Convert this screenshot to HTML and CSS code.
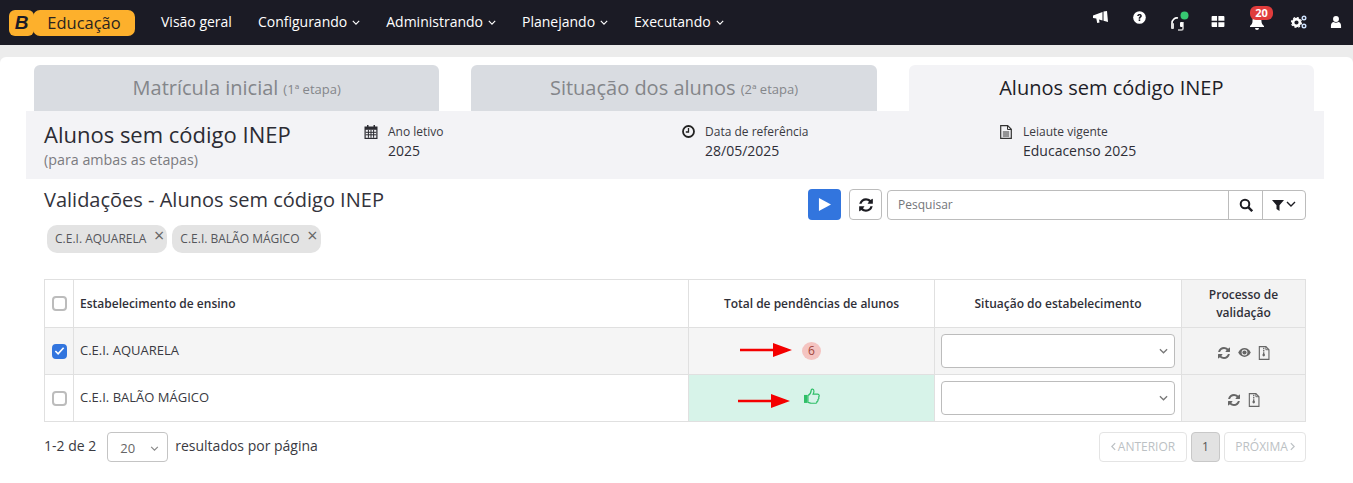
FILE: index.html
```html
<!DOCTYPE html>
<html lang="pt-BR">
<head>
<meta charset="utf-8">
<title>Alunos sem código INEP</title>
<link rel="stylesheet" href="styles.css">
</head>
<body>
<svg class="defs" width="0" height="0" aria-hidden="true">
  <defs>
    <symbol id="i-chev" viewBox="0 0 10 6"><path d="M1 1l4 4 4-4" fill="none" stroke="currentColor" stroke-width="1.4"/></symbol>
    <symbol id="i-left" viewBox="0 0 6 10"><path d="M5 1L1 5l4 4" fill="none" stroke="currentColor" stroke-width="1.5"/></symbol>
    <symbol id="i-right" viewBox="0 0 6 10"><path d="M1 1l4 4-4 4" fill="none" stroke="currentColor" stroke-width="1.5"/></symbol>
    <symbol id="i-sync" viewBox="0 0 1792 1792"><path d="M1639 1056q0 5-1 7-64 268-268 434.5t-478 166.5q-146 0-282.5-55t-243.5-157l-129 129q-19 19-45 19t-45-19-19-45v-448q0-26 19-45t45-19h448q26 0 45 19t19 45-19 45l-137 137q71 66 161 102t187 36q134 0 250-65t186-179q11-17 53-117 8-23 30-23h192q13 0 22.5 9.5t9.5 22.5zm25-800v448q0 26-19 45t-45 19h-448q-26 0-45-19t-19-45 19-45l138-138q-148-137-349-137-134 0-250 65t-186 179q-11 17-53 117-8 23-30 23h-199q-13 0-22.5-9.5t-9.5-22.5v-7q65-268 270-434.5t480-166.5q146 0 284 55.5t245 156.5l130-129q19-19 45-19t45 19 19 45z" fill="currentColor"/></symbol>
    <symbol id="i-zip" viewBox="0 0 12 15"><path d="M1 .7h7l3.300 3.300v10.300H1z" fill="none" stroke="currentColor" stroke-width="1.200"/><path d="M8 .7V4h3.300" fill="none" stroke="currentColor"/><path d="M5 2h1.400v1.400H5zM5 4.400h1.400v1.400H5zM5 6.800h1.400v1.600c.9.400 1 2.900-.7 2.900s-1.600-2.500-.7-2.900z" fill="currentColor"/></symbol>
    <symbol id="i-arrow" viewBox="0 0 52 14"><path d="M0 5.700h33V0l19 7-19 7V8.300H0z" fill="#f40000"/></symbol>
  </defs>
</svg>

<header class="navbar">
  <a class="brand">
    <span class="brand-b">B</span>
    <span class="brand-name">Educação</span>
  </a>
  <nav class="menu">
    <a class="menu-item">Visão geral</a>
    <a class="menu-item">Configurando<svg class="chev"><use href="#i-chev"/></svg></a>
    <a class="menu-item">Administrando<svg class="chev"><use href="#i-chev"/></svg></a>
    <a class="menu-item">Planejando<svg class="chev"><use href="#i-chev"/></svg></a>
    <a class="menu-item">Executando<svg class="chev"><use href="#i-chev"/></svg></a>
  </nav>
  <div class="tools">
    <span class="tool tool-1"><svg width="15" height="12" viewBox="0 0 15 12"><path d="M0 4.500L9.500 1v8.500L6 8.400 6.600 11.500l-2.400.5L3.300 7.500 0 7zM10.500.5L14 0l1 11-4.500-1.200z" fill="#fff"/></svg></span>
    <span class="tool tool-2"><svg width="13" height="13" viewBox="0 0 14 14"><circle cx="7" cy="7" r="6.800" fill="#fff"/><path d="M4.500 5.400C4.700 2.500 9.500 2.600 9.500 5.300c0 1.800-1.800 1.600-1.700 3H6.100C5.900 6 7.800 6 7.800 5.200c0-.9-1.500-.9-1.600.2z" fill="#1b1b25"/><rect x="6.100" y="9" width="1.700" height="1.800" fill="#1b1b25"/></svg></span>
    <span class="tool tool-3"><svg width="20" height="20" viewBox="0 0 20 20"><path d="M2 17v-5a5 5 0 0 1 6-5" fill="none" stroke="#fff" stroke-width="1.600"/><rect x="1" y="12" width="3" height="6" rx="1" fill="#ddd"/><path d="M13 11v6.500a1.500 1.500 0 0 1-1.500 1.500H8" fill="none" stroke="#ccc" stroke-width="1.600"/><rect x="10" y="11" width="3" height="5" rx="1" fill="#fff"/><circle cx="14.500" cy="4.500" r="4" fill="#37c871"/></svg></span>
    <span class="tool tool-4"><svg width="14" height="11" viewBox="0 0 14 12"><path d="M0 1a1 1 0 0 1 1-1h5v5.300H0zM7.400 0H13a1 1 0 0 1 1 1v4.300H7.400zM0 6.700h6V12H1a1 1 0 0 1-1-1zM7.400 6.700H14V11a1 1 0 0 1-1 1H7.400z" fill="#fff"/></svg></span>
    <span class="tool tool-5">
      <svg width="14" height="15" viewBox="0 0 14 15"><path d="M7 0a1 1 0 0 1 1 1c3 .6 3.500 3 3.500 5.500 0 2 1 3 2.500 4.500v1H0v-1c1.500-1.500 2.500-2.500 2.500-4.500C2.500 4 3 1.600 6 1a1 1 0 0 1 1-1zM5 13h4a2 2 0 0 1-4 0z" fill="#fff"/></svg>
      <span class="badge-count">20</span>
    </span>
    <span class="tool tool-6"><svg width="16" height="14" viewBox="0 0 16 14"><circle cx="5.500" cy="7.500" r="3.400" fill="none" stroke="#fff" stroke-width="2.600"/><circle cx="5.500" cy="7.500" r="5" fill="none" stroke="#fff" stroke-width="1.200" stroke-dasharray="2 1.900"/><circle cx="13" cy="3" r="1.800" fill="none" stroke="#cfe3ff" stroke-width="1.400"/><circle cx="13" cy="11" r="1.800" fill="none" stroke="#cfe3ff" stroke-width="1.400"/></svg></span>
    <span class="tool tool-7"><svg width="12" height="12" viewBox="0 0 11 13"><circle cx="5.500" cy="3.200" r="3.200" fill="#fff"/><path d="M0 13v-2.500C0 8 1.500 6.500 3 6.500c1.500 1 3.500 1 5 0 1.500 0 3 1.500 3 4V13z" fill="#fff"/></svg></span>
  </div>
</header>

<main class="panel">
  <div class="tabs">
    <a class="tab"><span class="tab-title">Matrícula inicial</span> <small>(1ª etapa)</small></a>
    <a class="tab"><span class="tab-title">Situação dos alunos</span> <small>(2ª etapa)</small></a>
    <a class="tab tab-active"><span class="tab-title">Alunos sem código INEP</span></a>
  </div>

  <section class="summary">
    <div class="summary-title">
      <h1>Alunos sem código INEP</h1>
      <p>(para ambas as etapas)</p>
    </div>
    <div class="info info-year">
      <svg class="info-icon" width="14" height="14" viewBox="0 0 14 14"><path d="M3 0h1.500v1.500h5V0H11v1.500h2.500V14H.5V1.500H3z" fill="#2c2c33"/><path d="M1.700 4.800h10.600v8H1.700z" fill="#f3f3f6"/><path d="M1.700 7.300h10.600M1.700 9.800h10.600M4.400 4.800v8M7 4.800v8M9.600 4.800v8" stroke="#2c2c33"/></svg>
      <div><span class="info-label">Ano letivo</span><span class="info-value">2025</span></div>
    </div>
    <div class="info info-date">
      <svg class="info-icon" width="13" height="13" viewBox="0 0 13 13"><circle cx="6.500" cy="6.500" r="5.500" fill="none" stroke="#222" stroke-width="1.800"/><path d="M6.500 3v4H3.800" fill="none" stroke="#222" stroke-width="1.300"/></svg>
      <div><span class="info-label">Data de referência</span><span class="info-value">28/05/2025</span></div>
    </div>
    <div class="info info-layout">
      <svg class="info-icon" width="12" height="14" viewBox="0 0 12 14"><path d="M.7.7h7l3.600 3.600v9H.7z" fill="none" stroke="#333" stroke-width="1.200"/><path d="M7.500.7v3.800h3.800M2.800 7h6.400M2.800 9h6.400M2.800 11h6.400" fill="none" stroke="#333"/></svg>
      <div><span class="info-label">Leiaute vigente</span><span class="info-value">Educacenso 2025</span></div>
    </div>
  </section>

  <section class="toolbar">
    <h2>Validações - Alunos sem código INEP</h2>
    <div class="actions">
      <button class="btn-play" type="button" aria-label="Executar"><svg width="13" height="13" viewBox="0 0 14 14"><path d="M1 0l13 7-13 7z" fill="#fff"/></svg></button>
      <button class="btn-sync" type="button" aria-label="Atualizar"><svg class="sync-dark"><use href="#i-sync"/></svg></button>
      <div class="search">
        <span class="search-input">Pesquisar</span>
        <span class="search-btn"><svg width="14" height="14" viewBox="0 0 14 14"><circle cx="6" cy="6" r="4.300" fill="none" stroke="#1c1c22" stroke-width="2"/><path d="M9.200 9.200l4 4" stroke="#1c1c22" stroke-width="2.400"/></svg></span>
        <span class="filter-btn"><svg width="12" height="11" viewBox="0 0 12 11"><path d="M0 0h12L7.500 5.200V11L4.500 9V5.200z" fill="#1c1c22"/></svg><svg class="chev filter-chev"><use href="#i-chev"/></svg></span>
      </div>
    </div>
  </section>

  <div class="chips">
    <span class="chip">C.E.I. AQUARELA<span class="chip-x">×</span></span>
    <span class="chip">C.E.I. BALÃO MÁGICO<span class="chip-x">×</span></span>
  </div>

  <table class="grid">
    <colgroup>
      <col class="col-check"><col class="col-name"><col class="col-total"><col class="col-status"><col class="col-process">
    </colgroup>
    <thead>
      <tr>
        <th class="cell-check"><span class="check"></span></th>
        <th class="th-name">Estabelecimento de ensino</th>
        <th>Total de pendências de alunos</th>
        <th>Situação do estabelecimento</th>
        <th class="th-process">Processo de validação</th>
      </tr>
    </thead>
    <tbody>
      <tr class="row-gray">
        <td class="cell-check"><span class="check checked"><svg width="12" height="10" viewBox="0 0 12 10"><path d="M1.500 5l3 3 6-6.500" fill="none" stroke="#fff" stroke-width="1.800"/></svg></span></td>
        <td class="cell-name">C.E.I. AQUARELA</td>
        <td class="cell-total">
          <svg class="arrow arrow-1"><use href="#i-arrow"/></svg>
          <span class="pending">6</span>
        </td>
        <td class="cell-select"><span class="select"><svg class="chev select-chev"><use href="#i-chev"/></svg></span></td>
        <td class="cell-process">
          <span class="proc-icons">
            <svg class="ic-sync"><use href="#i-sync"/></svg>
            <svg class="ic-eye" viewBox="0 0 14 10"><path d="M0 5c3.500-6.500 10.500-6.500 14 0-3.500 6.500-10.500 6.500-14 0z" fill="#666"/><circle cx="7" cy="5" r="3.200" fill="#f5f5f5"/><circle cx="7" cy="5" r="2.300" fill="#666"/></svg>
            <svg class="ic-zip"><use href="#i-zip"/></svg>
          </span>
        </td>
      </tr>
      <tr class="row-white">
        <td class="cell-check"><span class="check"></span></td>
        <td class="cell-name">C.E.I. BALÃO MÁGICO</td>
        <td class="cell-total cell-ok">
          <svg class="arrow arrow-2"><use href="#i-arrow"/></svg>
          <svg class="thumb" width="16" height="16" viewBox="0 0 15 15"><path d="M0 6.500h3.200V14H0z" fill="#2fbf68"/><path d="M3.700 7c1.800-.8 2.900-2.600 3.100-5 .1-1.400 2.400-1.200 2.500.7.100 1-.3 2-.8 3.100h4.300c1.700 0 1.800 2 .9 2.600.5 1 .2 2-.6 2.400.2 1-.3 1.800-1 2 .1 1-.5 1.500-1.500 1.500H7c-1.300 0-2.300-.6-3.300-.9z" fill="none" stroke="#2fbf68" stroke-width="1.100"/></svg>
        </td>
        <td class="cell-select"><span class="select"><svg class="chev select-chev"><use href="#i-chev"/></svg></span></td>
        <td class="cell-process">
          <span class="proc-icons">
            <svg class="ic-sync"><use href="#i-sync"/></svg>
            <svg class="ic-zip"><use href="#i-zip"/></svg>
          </span>
        </td>
      </tr>
    </tbody>
  </table>

  <footer class="pager">
    <div class="pager-left">
      <span class="pager-text">1-2 de 2</span>
      <span class="page-size">20<svg class="chev size-chev"><use href="#i-chev"/></svg></span>
      <span class="pager-text">resultados por página</span>
    </div>
    <div class="pager-right">
      <span class="page-btn page-prev"><svg class="page-arrow"><use href="#i-left"/></svg>ANTERIOR</span>
      <span class="page-num">1</span>
      <span class="page-btn page-next">PRÓXIMA<svg class="page-arrow"><use href="#i-right"/></svg></span>
    </div>
  </footer>
</main>
</body>
</html>
```
FILE: styles.css
```css
* { box-sizing: border-box; }
html, body { margin: 0; padding: 0; }
body {
  width: 1353px;
  height: 483px;
  overflow: hidden;
  background: #ececec;
  font-family: "Open Sans", "Liberation Sans", sans-serif;
  color: #333;
}
.defs { position: absolute; }
a { color: inherit; text-decoration: none; }

.navbar {
  display: flex;
  align-items: center;
  height: 45px;
  background: #1b1b25;
  padding-left: 9px;
}
.brand { display: flex; width: 126px; height: 26px; }
.brand-b {
  width: 25px;
  height: 26px;
  border-radius: 6px;
  background: #fdb02c;
  color: #1b1b25;
  font: italic 700 19px/26px "Liberation Sans", sans-serif;
  text-align: center;
}
.brand-name {
  flex: 1;
  margin-left: -1px;
  border-radius: 7px;
  background: #fdb02c;
  color: #2a2320;
  font-size: 16.500px;
  font-weight: 500;
  line-height: 25px;
  text-align: center;
}
.menu {
  display: flex;
  align-items: center;
  gap: 26px;
  margin-left: 26px;
  padding-bottom: 2px;
  color: #fff;
  font-size: 14px;
}
.menu-item { display: flex; align-items: center; white-space: nowrap; }
.chev { width: 8px; height: 5px; color: inherit; margin-left: 5px; margin-top: 2px; }

.tools {
  margin-left: auto;
  display: flex;
  height: 45px;
}
.tool { position: relative; display: flex; justify-content: center; align-items: flex-start; }
.tool-1 { width: 39px; padding-top: 11px; }
.tool-2 { width: 39px; padding-top: 11px; }
.tool-3 { width: 39px; padding-top: 11px; padding-left: 2px; }
.tool-4 { width: 39px; padding-top: 16px; }
.tool-5 { width: 40px; padding-top: 15px; }
.tool-6 { width: 41px; padding-top: 15px; padding-left: 3px; padding-right: 1px; }
.tool-7 { width: 35px; padding-top: 16px; padding-left: 1px; }
.badge-count {
  position: absolute;
  top: 6px;
  left: 13px;
  width: 23px;
  height: 14px;
  border-radius: 6px;
  background: #e03c3c;
  color: #fff;
  font-size: 11px;
  font-weight: 700;
  line-height: 14px;
  text-align: center;
}

.panel {
  margin-top: 12px;
  height: 426px;
  background: #fff;
  border-radius: 6px 6px 0 0;
  padding: 8px 0 0;
}
.tabs {
  display: flex;
  gap: 32px;
  margin: 0 39px 0 34px;
  height: 46px;
}
.tab {
  flex: 1;
  display: flex;
  align-items: center;
  justify-content: center;
  gap: 5px;
  padding-bottom: 2px;
  background: #d9dce1;
  border-radius: 6px 6px 0 0;
  color: #84868a;
}
.tab-title { font-size: 20px; }
.tab small { font-size: 13px; margin-top: 4px; }
.tab-active { background: #f3f3f6; color: #1e1e28; }

.summary {
  display: flex;
  margin: 0 29px 0 26px;
  height: 68px;
  background: #f3f3f6;
  padding: 8px 18px 0;
  color: #333;
}
.summary-title { width: 320px; }
.summary-title h1 { margin: 0; font-size: 22px; font-weight: 400; line-height: 30px; color: #2b2b33; }
.summary-title p { margin: 2px 0 0; font-size: 14.300px; line-height: 18px; color: #7b7b80; }
.info { display: flex; padding-top: 5px; }
.info-icon { margin-top: 1px; flex: none; }
.info-label { display: block; font-size: 12px; line-height: 16px; color: #3a3a42; }
.info-value { display: block; font-size: 14px; line-height: 20px; margin-top: 1px; color: #2e2e36; }
.info-year { width: 318px; gap: 10px; }
.info-date { width: 318px; gap: 10px; }
.info-layout { gap: 11px; }

.toolbar {
  display: flex;
  justify-content: space-between;
  align-items: flex-start;
  margin: 0 47px 0 44px;
  height: 50px;
}
.toolbar h2 { margin: 7px 0 0; font-size: 20px; font-weight: 400; line-height: 28px; color: #33333b; }
.actions { display: flex; align-items: flex-start; margin-top: 10px; }
button { padding: 0; font: inherit; }
.btn-play {
  display: flex; align-items: center; justify-content: center;
  width: 33px; height: 31px;
  background: #3275de;
  border: 0;
  border-radius: 4px;
  margin-right: 8px;
}
.btn-sync {
  display: flex; align-items: center; justify-content: center;
  width: 33px; height: 31px;
  background: #fff;
  border: 1px solid #bcbcbc;
  border-radius: 4px;
  margin-right: 5px;
}
.sync-dark { width: 16px; height: 16px; color: #1c1c22; }
.search {
  display: flex;
  width: 419px;
  height: 30px;
  margin-top: 1px;
  border: 1px solid #bcbcbc;
  border-radius: 4px;
}
.search-input { flex: 1; padding-left: 10px; font-size: 12px; line-height: 28px; color: #74767a; }
.search-btn {
  display: flex; align-items: center; justify-content: center;
  width: 34px;
  border-left: 1px solid #bcbcbc;
}
.filter-btn {
  display: flex; align-items: center; justify-content: center;
  width: 43px;
  border-left: 1px solid #bcbcbc;
  color: #1c1c22;
}
.filter-chev { margin: 0 0 2px 2px; width: 10px; height: 6px; }

.chips { display: flex; gap: 5px; margin: -4px 0 0 47px; height: 54px; }
.chip {
  position: relative;
  height: 28px;
  background: #e3e3e3;
  border-radius: 10px;
  padding: 0 21px 0 8px;
  font-size: 12px;
  line-height: 28px;
  color: #55565b;
  white-space: nowrap;
}
.chip-x { position: absolute; right: 3px; top: -2px; font-size: 18px; line-height: 24px; color: #666; }

.grid {
  table-layout: fixed;
  border-collapse: collapse;
  width: 1262px;
  margin-left: 44px;
  font-size: 13px;
  color: #333;
}
.col-check { width: 29px; }
.col-total { width: 246px; }
.col-status { width: 247px; }
.col-process { width: 124px; }
.grid th, .grid td { border: 1px solid #e0e0e0; padding: 0; }
.grid th {
  height: 48px;
  font-size: 12px;
  font-weight: 600;
  text-align: center;
  color: #303038;
  line-height: 18px;
}
.grid th.th-name { text-align: left; padding-left: 6px; }
.grid th.th-process { background: #f3f3f3; padding: 0 20px; }
.grid td { height: 47px; padding-left: 6px; color: #3a3a42; }
.grid td.cell-name { padding-bottom: 2px; }
.grid td.cell-check, .grid th.cell-check { padding: 0; text-align: center; }
.row-gray td { background: #f5f5f5; }
.check {
  display: inline-flex;
  align-items: center;
  justify-content: center;
  width: 15px;
  height: 15px;
  margin-bottom: 2px;
  vertical-align: middle;
  border: 2px solid #bcbcbc;
  border-radius: 4px;
  background: #fff;
}
.checked { background: #3275de; border-color: #3275de; }
.grid td.cell-total { position: relative; padding: 0; text-align: center; }
.grid td.cell-ok { background: #d7f3e9; }
.arrow { position: absolute; width: 52px; height: 14px; }
.arrow-1 { left: 51px; top: 15px; }
.arrow-2 { left: 49px; top: 19px; }
.pending {
  display: inline-block;
  width: 19px;
  height: 18px;
  margin-bottom: 1px;
  border-radius: 50%;
  background: #f4c4c1;
  color: #a0443c;
  font-size: 12px;
  line-height: 18px;
}
.thumb { margin-bottom: 4px; display: inline-block; vertical-align: middle; }
.grid td.cell-select { padding: 0 6px; }
.select {
  display: flex;
  align-items: center;
  justify-content: flex-end;
  height: 34px;
  margin-top: -1px;
  padding-right: 6px;
  background: #fff;
  border: 1px solid #bcbcbc;
  border-radius: 4px;
  color: #777;
}
.select-chev { width: 9px; height: 6px; margin: 1px 0 0; }
.grid td.cell-process { background: #f3f3f3; padding: 0; text-align: center; }
.proc-icons { display: inline-flex; align-items: center; gap: 7px; color: #666; vertical-align: middle; }
.ic-sync { width: 14px; height: 14px; }
.ic-eye { width: 13px; height: 9px; }
.ic-zip { width: 12px; height: 14px; }

.pager {
  display: flex;
  justify-content: space-between;
  margin: 10px 47px 0 44px;
  font-size: 14px;
  color: #3a3a42;
}
.pager-left { display: flex; align-items: center; gap: 8px; height: 30px; }
.pager-text { padding-bottom: 4px; }
.page-size {
  display: flex;
  align-items: center;
  justify-content: space-between;
  width: 61px;
  height: 30px;
  margin-left: 3px;
  margin-right: -1px;
  padding: 2px 8px 0 12px;
  border: 1px solid #c4c4c4;
  border-radius: 4px;
  font-size: 13px;
  color: #666;
}
.size-chev { margin: 0; width: 9px; height: 5px; color: #888; }
.pager-right { display: flex; gap: 4px; }
.page-btn {
  display: flex; align-items: center; justify-content: center;
  gap: 2px;
  height: 30px;
  padding-bottom: 2px;
  border: 1px solid #e4e4e4;
  border-radius: 4px;
  font-size: 12px;
  color: #bcc1c4;
}
.page-arrow { width: 5px; height: 9px; margin-top: 1px; }
.page-prev { width: 88px; }
.page-next { width: 82px; }
.page-num {
  display: flex; align-items: center; justify-content: center;
  width: 29px;
  height: 30px;
  padding-bottom: 2px;
  background: #e2e2e2;
  border: 1px solid #c8c8c8;
  border-radius: 4px;
  font-size: 12px;
  color: #555;
}
```
